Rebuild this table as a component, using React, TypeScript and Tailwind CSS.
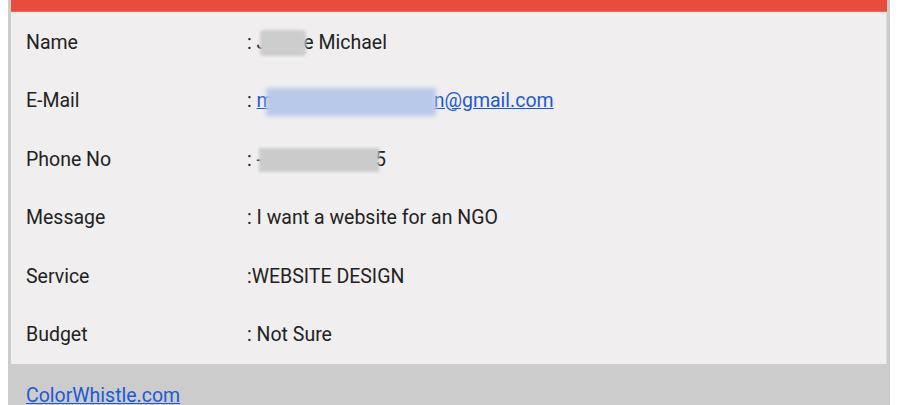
import React from "react";

const rows: { label: string; value: React.ReactNode }[] = [
  {
    label: "Name",
    value: (
      <>
        : J
        <span className="inline-block align-middle w-[46px] h-[26px] -ml-[7px] -mr-[3px] bg-[#cdcdcd] blur-[1.5px] rounded-sm" />
        e Michael
      </>
    ),
  },
  {
    label: "E-Mail",
    value: (
      <>
        :{" "}
        <a href="#" className="text-[#1a5ad7] underline">
          m
          <span className="inline-block align-middle w-[170px] h-[28px] -ml-[8px] -mr-[2px] bg-[#b9c9e9] blur-[2px]" />
          n@gmail.com
        </a>
      </>
    ),
  },
  {
    label: "Phone No",
    value: (
      <>
        : -
        <span className="inline-block align-middle w-[120px] h-[24px] -ml-[3px] -mr-[4px] bg-[#cbcbcb] blur-[1.5px]" />
        5
      </>
    ),
  },
  { label: "Message", value: ": I want a website for an NGO" },
  { label: "Service", value: ":WEBSITE DESIGN" },
  { label: "Budget", value: ": Not Sure" },
];

export default function App() {
  return (
    <div
      className="w-[900px] h-[405px] overflow-hidden bg-white"
      style={{ fontFamily: "Roboto, 'Open Sans', Arial, sans-serif" }}
    >
      <div className="ml-[8px] w-[882px] bg-[#cccccc] px-[3px]">
        <div className="h-[12px] bg-[#e84c3d] border-b border-[#ec6a5c]" />
        <div className="bg-[#f0eeef] border-r border-[#dcdcdc] pt-[1px]">
          {rows.map((r) => (
            <div
              key={r.label}
              className="h-[58.5px] flex items-center text-[19.5px] text-[#222]"
            >
              <div className="w-[236px] pl-[15px]">{r.label}</div>
              <div className="whitespace-nowrap">{r.value}</div>
            </div>
          ))}
        </div>
        <div className="h-[60px] pt-[17px] pl-[15px] text-[19.5px]">
          <a href="#" className="text-[#1a5ad7] underline">
            ColorWhistle.com
          </a>
        </div>
      </div>
    </div>
  );
}
